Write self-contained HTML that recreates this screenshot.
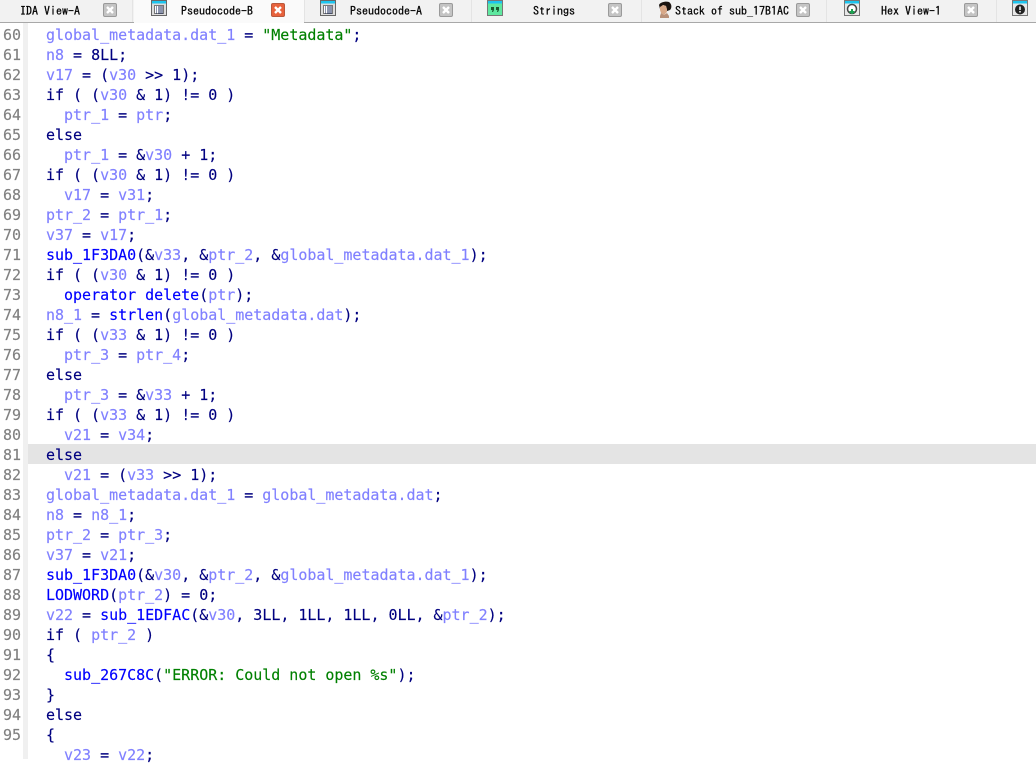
<!DOCTYPE html>
<html><head><meta charset="utf-8"><style>
html,body{margin:0;padding:0;width:1036px;height:759px;overflow:hidden;background:#fff}
#tabs{position:absolute;left:0;top:0;width:1036px;height:22px;background:#f2f2f2;border-bottom:1px solid #a8a8a8}
.act{position:absolute;left:134px;top:0;width:170px;height:23px;background:#fafafa}
.sep{position:absolute;top:0;width:1px;height:22px;background:#e4e4e4}
.t{position:absolute;top:4px;font:12px/14px "IPAGothic","Liberation Mono",monospace;color:#000;white-space:pre;-webkit-text-stroke:.25px #000}
.x{position:absolute;top:3px;width:14px;height:14px;box-sizing:border-box;border:1px solid #9a9a9a;border-radius:2px;background:#c4c4c4}
.x svg{position:absolute;left:0;top:0}
.x.a{background:#e8623c;border-color:#b9583c}
svg{position:absolute;top:0}
#gut{position:absolute;left:23px;top:23px;width:5px;height:736px;background:#f0f0f0}
#hl{position:absolute;left:28px;top:444px;width:1008px;height:20px;background:#e4e4e4}
pre{position:absolute;margin:0;top:25px;font:15px/20px "DejaVu Sans Mono",monospace;color:#000080;-webkit-text-stroke:.15px currentColor}
#num{left:3px;color:#808080}
#code{left:46px;letter-spacing:-.02px}
i{font-style:normal;color:#8080ff}
b{font-weight:normal;color:#0000ff}
u{text-decoration:none;color:#008000}
</style></head><body>
<div id="tabs">
<div class="act"></div>
<div class="sep" style="left:132px"></div><div class="sep" style="left:304px"></div><div class="sep" style="left:471px"></div><div class="sep" style="left:641px"></div><div class="sep" style="left:826px"></div><div class="sep" style="left:996px"></div>
<div class="t" style="left:20px">IDA View-A</div><div class="x" style="left:103px"><svg width="12" height="12" viewBox="0 0 12 12"><path d="M3 3l6 6M9 3l-6 6" stroke="#fff" stroke-width="2.400"/></svg></div>
<svg style="left:151px" width="16" height="16" viewBox="0 0 16 16"><rect x=".5" y=".5" width="15" height="15" fill="#ddd" stroke="#666"/><rect x="1" y="1" width="14" height="2.500" fill="#1cc4ee"/><rect x="3.500" y="5.500" width="9" height="8" fill="#fff" stroke="#777"/><path d="M5 7h1M7 7h5M5 9h1M7 9h5M5 11h1M7 11h5M5 13h1M7 13h5" stroke="#1a2a58" stroke-width="1"/></svg>
<div class="t" style="left:181px">Pseudocode-B</div><div class="x a" style="left:271px"><svg width="12" height="12" viewBox="0 0 12 12"><path d="M3 3l6 6M9 3l-6 6" stroke="#fff" stroke-width="2.400"/></svg></div>
<svg style="left:320px" width="16" height="16" viewBox="0 0 16 16"><rect x=".5" y=".5" width="15" height="15" fill="#ddd" stroke="#666"/><rect x="1" y="1" width="14" height="2.500" fill="#1cc4ee"/><rect x="3.500" y="5.500" width="9" height="8" fill="#fff" stroke="#777"/><path d="M5 7h1M7 7h5M5 9h1M7 9h5M5 11h1M7 11h5M5 13h1M7 13h5" stroke="#1a2a58" stroke-width="1"/></svg>
<div class="t" style="left:350px">Pseudocode-A</div><div class="x" style="left:439px"><svg width="12" height="12" viewBox="0 0 12 12"><path d="M3 3l6 6M9 3l-6 6" stroke="#fff" stroke-width="2.400"/></svg></div>
<svg style="left:487px" width="16" height="16" viewBox="0 0 16 16"><rect x=".5" y=".5" width="15" height="15" fill="#5fe8a0" stroke="#777"/><rect x="1" y="1" width="14" height="2.500" fill="#1cc4ee"/><path d="M4 7h3v3l-1 2H5l.5-2H4zM9 7h3v3l-1 2h-1l.5-2H9z" fill="#1a5a30"/></svg>
<div class="t" style="left:533px">Strings</div><div class="x" style="left:608px"><svg width="12" height="12" viewBox="0 0 12 12"><path d="M3 3l6 6M9 3l-6 6" stroke="#fff" stroke-width="2.400"/></svg></div>
<svg style="left:656px;top:1px" width="16" height="17" viewBox="0 0 16 17"><path d="M3 4C4 1 10 0 13 1c3 2 3 6 1 8l-3 1-1-5-3-1-2 3v3L4 8z" fill="#1c1410"/><path d="M4 6l3-2 3 1 1 3v3l-3 3-3-2-1-3z" fill="#d8a888"/><path d="M5 12l3 2 3-2 2 3v2H4v-2z" fill="#b89078"/></svg>
<div class="t" style="left:675px">Stack of sub_17B1AC</div><div class="x" style="left:796px"><svg width="12" height="12" viewBox="0 0 12 12"><path d="M3 3l6 6M9 3l-6 6" stroke="#fff" stroke-width="2.400"/></svg></div>
<svg style="left:844px" width="16" height="16" viewBox="0 0 16 16"><rect x=".5" y=".5" width="15" height="15" fill="#e8e8e8" stroke="#777"/><rect x="1" y="1" width="14" height="2.500" fill="#1cc4ee"/><circle cx="8" cy="9" r="4.500" fill="#fff" stroke="#444" stroke-width="1.500"/><path d="M8 9v5M5.500 12h5" stroke="#1ca050" stroke-width="2"/></svg>
<div class="t" style="left:881px">Hex View-1</div><div class="x" style="left:964px"><svg width="12" height="12" viewBox="0 0 12 12"><path d="M3 3l6 6M9 3l-6 6" stroke="#fff" stroke-width="2.400"/></svg></div>
<svg style="left:1012px" width="16" height="16" viewBox="0 0 16 16"><rect x=".5" y=".5" width="15" height="15" fill="#e8e8e8" stroke="#777"/><rect x="1" y="1" width="14" height="2.500" fill="#1cc4ee"/><circle cx="8" cy="9.500" r="5" fill="#222"/><path d="M8 6.500v3.500M8 11v1.500" stroke="#fff" stroke-width="1.500"/></svg>
</div>
<div id="gut"></div>
<div id="hl"></div>
<pre id="num">60
61
62
63
64
65
66
67
68
69
70
71
72
73
74
75
76
77
78
79
80
81
82
83
84
85
86
87
88
89
90
91
92
93
94
95</pre>
<pre id="code"><i>global_metadata.dat_1</i> = <u>"Metadata"</u>;
<i>n8</i> = 8LL;
<i>v17</i> = (<i>v30</i> &gt;&gt; 1);
if ( (<i>v30</i> &amp; 1) != 0 )
  <i>ptr_1</i> = <i>ptr</i>;
else
  <i>ptr_1</i> = &amp;<i>v30</i> + 1;
if ( (<i>v30</i> &amp; 1) != 0 )
  <i>v17</i> = <i>v31</i>;
<i>ptr_2</i> = <i>ptr_1</i>;
<i>v37</i> = <i>v17</i>;
<b>sub_1F3DA0</b>(&amp;<i>v33</i>, &amp;<i>ptr_2</i>, &amp;<i>global_metadata.dat_1</i>);
if ( (<i>v30</i> &amp; 1) != 0 )
  <b>operator delete</b>(<i>ptr</i>);
<i>n8_1</i> = <b>strlen</b>(<i>global_metadata.dat</i>);
if ( (<i>v33</i> &amp; 1) != 0 )
  <i>ptr_3</i> = <i>ptr_4</i>;
else
  <i>ptr_3</i> = &amp;<i>v33</i> + 1;
if ( (<i>v33</i> &amp; 1) != 0 )
  <i>v21</i> = <i>v34</i>;
else
  <i>v21</i> = (<i>v33</i> &gt;&gt; 1);
<i>global_metadata.dat_1</i> = <i>global_metadata.dat</i>;
<i>n8</i> = <i>n8_1</i>;
<i>ptr_2</i> = <i>ptr_3</i>;
<i>v37</i> = <i>v21</i>;
<b>sub_1F3DA0</b>(&amp;<i>v30</i>, &amp;<i>ptr_2</i>, &amp;<i>global_metadata.dat_1</i>);
<b>LODWORD</b>(<i>ptr_2</i>) = 0;
<i>v22</i> = <b>sub_1EDFAC</b>(&amp;<i>v30</i>, 3LL, 1LL, 1LL, 0LL, &amp;<i>ptr_2</i>);
if ( <i>ptr_2</i> )
{
  <b>sub_267C8C</b>(<u>"ERROR: Could not open %s"</u>);
}
else
{
  <i>v23</i> = <i>v22</i>;</pre>
</body></html>
